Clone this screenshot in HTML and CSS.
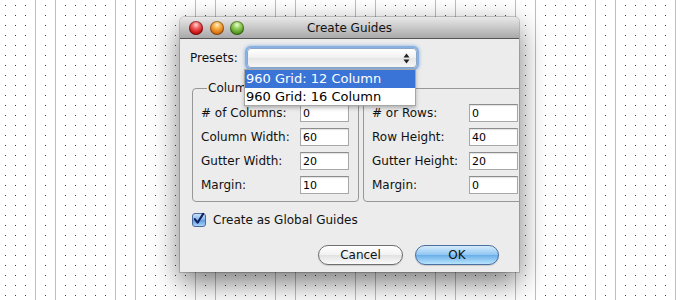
FILE: index.html
```html
<!DOCTYPE html>
<html lang="en">
<head>
  <meta charset="UTF-8" />
  <title>Create Guides</title>
  <link rel="stylesheet" href="styles.css">
</head>
<body>
  <div class="window">
    <div class="titlebar">
      <div class="lights">
        <span class="light red"></span>
        <span class="light yellow"></span>
        <span class="light green"></span>
      </div>
      <div class="title">Create Guides</div>
    </div>

    <div class="content">
      <div class="presets">
        <span>Presets:</span>
        <div class="select">
          <svg class="arrows" width="7" height="11" viewBox="0 0 7 11">
            <path d="M3.5 0.5 L6.5 4.5 L0.5 4.5 Z" fill="#222"/>
            <path d="M3.5 10.5 L6.5 6.5 L0.5 6.5 Z" fill="#222"/>
          </svg>
        </div>
      </div>

      <div class="groups">
        <fieldset class="group">
          <legend>Columns</legend>
          <div class="rows">
            <div class="row"><label># of Columns:</label><input type="text" value="0"></div>
            <div class="row"><label>Column Width:</label><input type="text" value="60"></div>
            <div class="row"><label>Gutter Width:</label><input type="text" value="20"></div>
            <div class="row"><label>Margin:</label><input type="text" value="10"></div>
          </div>
        </fieldset>
        <fieldset class="group right">
          <legend>Rows</legend>
          <div class="rows">
            <div class="row"><label># or Rows:</label><input type="text" value="0"></div>
            <div class="row"><label>Row Height:</label><input type="text" value="40"></div>
            <div class="row"><label>Gutter Height:</label><input type="text" value="20"></div>
            <div class="row"><label>Margin:</label><input type="text" value="0"></div>
          </div>
        </fieldset>
      </div>

      <div class="check-row">
        <span class="checkbox">
          <svg width="14" height="14" viewBox="0 0 14 14">
            <path d="M3 7 L6 11 L12 1.5" fill="none" stroke="#10205a" stroke-width="2.2" stroke-linecap="round" stroke-linejoin="round"/>
          </svg>
        </span>
        <span>Create as Global Guides</span>
      </div>

      <div class="buttons">
        <button class="btn">Cancel</button>
        <button class="btn ok">OK</button>
      </div>
    </div>

    <div class="menu">
      <div class="item active">960 Grid: 12 Column</div>
      <div class="item">960 Grid: 16 Column</div>
    </div>
  </div>
</body>
</html>
```

FILE: styles.css
```css
html, body {
  margin: 0;
  width: 680px;
  height: 300px;
  overflow: hidden;
}

body {
  font-family: "DejaVu Sans", sans-serif;
  font-size: 12px;
  color: #111;
  padding-top: 17px;
  box-sizing: border-box;
  background-color: #fff;
  background-image:
    linear-gradient(to right, transparent 35px, #ee9cee 35px, #ee9cee 36px, transparent 36px, transparent 55px, #ee9cee 55px, #ee9cee 56px, transparent 56px),
    linear-gradient(to bottom, #fff 5px, transparent 5px, transparent 6px, #fff 6px),
    linear-gradient(to right, #fff 5px, transparent 5px, transparent 6px, #fff 6px),
    linear-gradient(#2d2d96, #2d2d96);
  background-size: 80px 100%, 10px 10px, 10px 10px, 100% 100%;
}

.window {
  position: relative;
  margin-left: 180px;
  width: 339px;
  height: 255px;
  background: #ececec;
  border-radius: 5px 5px 0 0;
  box-shadow: 0 10px 28px rgba(0, 0, 0, 0.55), 0 0 0 1px rgba(0, 0, 0, 0.18);
  overflow: hidden;
}

.titlebar {
  position: relative;
  height: 21px;
  border-bottom: 1px solid #555;
  background: linear-gradient(#e8e8e8, #a9a9a9);
  display: flex;
  align-items: center;
  justify-content: center;
}

.lights {
  position: absolute;
  left: 9px;
  top: 4px;
  display: flex;
  gap: 6.5px;
}

.light {
  width: 14px;
  height: 14px;
  border-radius: 50%;
  box-shadow: inset 0 0 0 1px rgba(0, 0, 0, 0.35);
}

.red {
  background: radial-gradient(circle at 50% 28%, #ffd4d4 0, #f06060 30%, #d01818 62%, #8a0a0a 100%);
}

.yellow {
  background: radial-gradient(circle at 50% 28%, #fff0c8 0, #f8b048 30%, #e07818 62%, #995010 100%);
}

.green {
  background: radial-gradient(circle at 50% 28%, #e8ffd0 0, #98d060 30%, #5aa028 62%, #2e6a10 100%);
}

.title {
  color: #111;
}

.content {
  padding: 9px 0 0 0;
}

.presets {
  display: flex;
  align-items: center;
  padding-left: 10px;
}

.select {
  position: relative;
  margin-left: 9px;
  width: 168px;
  height: 18px;
  border: 1px solid #8aa6c8;
  border-radius: 4px;
  background: linear-gradient(#fff, #f0f0f0 50%, #e6e6e6 51%, #f6f6f6);
  box-shadow: 0 0 0 2px #88b0e0, 0 0 3px 3px rgba(110, 160, 220, 0.5);
}

.arrows {
  position: absolute;
  right: 6px;
  top: 4px;
}

.groups {
  display: flex;
  gap: 4px;
  margin-top: 13px;
  padding-left: 12px;
}

.group {
  flex-shrink: 0;
  margin: 0;
  width: 167px;
  height: 121px;
  box-sizing: border-box;
  border: 1px solid #979797;
  border-radius: 4px;
  padding: 0 9px 0 8px;
  min-width: 0;
}

.group.right {
  width: 170px;
  padding-right: 0;
}

.group legend {
  padding: 0 1px;
  margin-left: 6px;
  font-size: 12px;
}

.rows {
  display: flex;
  flex-direction: column;
  gap: 6px;
  padding-top: 9px;
}

.row {
  display: flex;
  justify-content: space-between;
  align-items: center;
  height: 18px;
  white-space: nowrap;
}

.group.right .row {
  width: 146px;
}

.row input {
  flex-shrink: 0;
  width: 49px;
  height: 18px;
  box-sizing: border-box;
  border: 1px solid #a8a8a8;
  border-top-color: #8c8c8c;
  box-shadow: inset 0 1px 1px rgba(0, 0, 0, 0.12);
  padding: 1px 2px 0;
  font-family: "DejaVu Sans", sans-serif;
  font-size: 11px;
  color: #000;
  background: #fff;
  outline: none;
}

.check-row {
  display: flex;
  align-items: center;
  gap: 7px;
  margin-top: 11px;
  padding-left: 12px;
}

.checkbox {
  width: 14px;
  height: 14px;
  box-sizing: border-box;
  border: 1px solid #4a6a9a;
  border-radius: 3px;
  background: linear-gradient(#c8e0fa, #7eb2ec 50%, #5c9ae4 51%, #a8d4fc);
  display: flex;
}

.checkbox svg {
  margin: -2px 0 0 -1px;
}

.buttons {
  display: flex;
  justify-content: flex-end;
  gap: 12px;
  margin-top: 18px;
  padding-right: 20px;
}

.btn {
  width: 85px;
  height: 20px;
  border: 1px solid #6e6e6e;
  border-radius: 10px;
  background: linear-gradient(#ffffff, #f2f2f2 50%, #e2e2e2 51%, #fafafa);
  box-shadow: 0 1px 1px rgba(0, 0, 0, 0.15);
  font-family: "DejaVu Sans", sans-serif;
  font-size: 12px;
  color: #111;
  padding: 0;
}

.btn.ok {
  width: 84px;
  border-color: #4a6e9e;
  background: linear-gradient(#d6ecfc, #8ec4f2 50%, #6aaee8 51%, #b8e4fe);
}

.menu {
  position: absolute;
  left: 64px;
  top: 52px;
  width: 172px;
  background: #fff;
  border: 1px solid #a6a6a6;
  box-sizing: border-box;
  box-shadow: 0 2px 4px rgba(0, 0, 0, 0.25);
  font-size: 13px;
}

.item {
  height: 17px;
  line-height: 17px;
  padding-left: 1px;
  color: #000;
}

.item.active {
  height: 18px;
  line-height: 18px;
  background: #3a74d6;
  color: #fff;
}
```
